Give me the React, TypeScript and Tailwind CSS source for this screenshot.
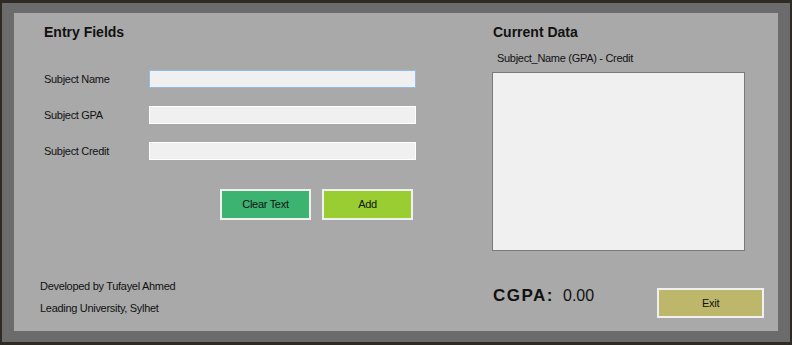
export default function App() {
  const label = "text-[11px] tracking-[-0.3px] text-[#111]";
  return (
    <div className="w-[792px] h-[345px] bg-[#2f2a23] pt-[3px] pl-[2px]" style={{ fontFamily: '"Liberation Sans", Arial, sans-serif' }}>
      <div className="w-[788px] h-[339px] bg-[#6b6b6b] pt-[10px] pl-[12px]">
        <div className="w-[764px] h-[318px] bg-[#a9a9a9] flex">
          {/* left column */}
          <div className="w-[464px] flex flex-col pl-[26px] pt-[11px] pb-[16px]">
            <div className="pl-[4px] text-[14px] leading-[16px] font-bold text-[#111]">Entry Fields</div>
            <div className="mt-[30px] flex flex-col gap-[18px] pl-[4px]">
              {["Subject Name", "Subject GPA", "Subject Credit"].map((t, i) => (
                <div key={t} className="flex items-center">
                  <div className={`w-[105px] ${label}`}>{t}</div>
                  <div
                    className={`w-[267px] h-[18px] bg-[#f0f0f0] border ${i === 0 ? "border-[#8fbde8]" : "border-white"}`}
                  />
                </div>
              ))}
            </div>
            <div className="mt-[29px] flex gap-[11px] pl-[180px]">
              <div className="w-[91px] h-[31px] bg-[#3cb371] border-2 border-[#f0f0f0] flex items-center justify-center text-[11px] tracking-[-0.3px] text-[#111]">
                Clear Text
              </div>
              <div className="w-[91px] h-[31px] bg-[#9acd32] border-2 border-[#f0f0f0] flex items-center justify-center text-[11px] tracking-[-0.3px] text-[#111]">
                Add
              </div>
            </div>
            <div className="mt-auto flex flex-col gap-[9px]">
              <div className={`${label} leading-[13px]`}>Developed by Tufayel Ahmed</div>
              <div className={`${label} leading-[13px]`}>Leading University, Sylhet</div>
            </div>
          </div>
          {/* right column */}
          <div className="flex flex-col pl-[14px] pt-[11px]">
            <div className="pl-px text-[14px] leading-[16px] font-bold text-[#111]">Current Data</div>
            <div className={`mt-[12px] pl-[5px] ${label} leading-[13px]`}>Subject_Name (GPA) - Credit</div>
            <div className="mt-[7px] w-[253px] h-[179px] bg-[#f0f0f0] border border-[#7a7a7a]" />
            <div className="mt-[24px] flex items-start">
              <div className="pl-px pt-[12px] text-[17px] leading-[18px] font-bold tracking-[1.5px] text-[#111]">CGPA:</div>
              <div className="pl-[9px] pt-[12px] text-[16px] leading-[18px] text-[#111]">0.00</div>
              <div className="ml-[63px] mt-[13px] w-[107px] h-[30px] bg-[#bdb76b] border-2 border-[#f0f0f0] flex items-center justify-center text-[11px] tracking-[-0.3px] text-[#111]">
                Exit
              </div>
            </div>
          </div>
        </div>
      </div>
    </div>
  );
}
